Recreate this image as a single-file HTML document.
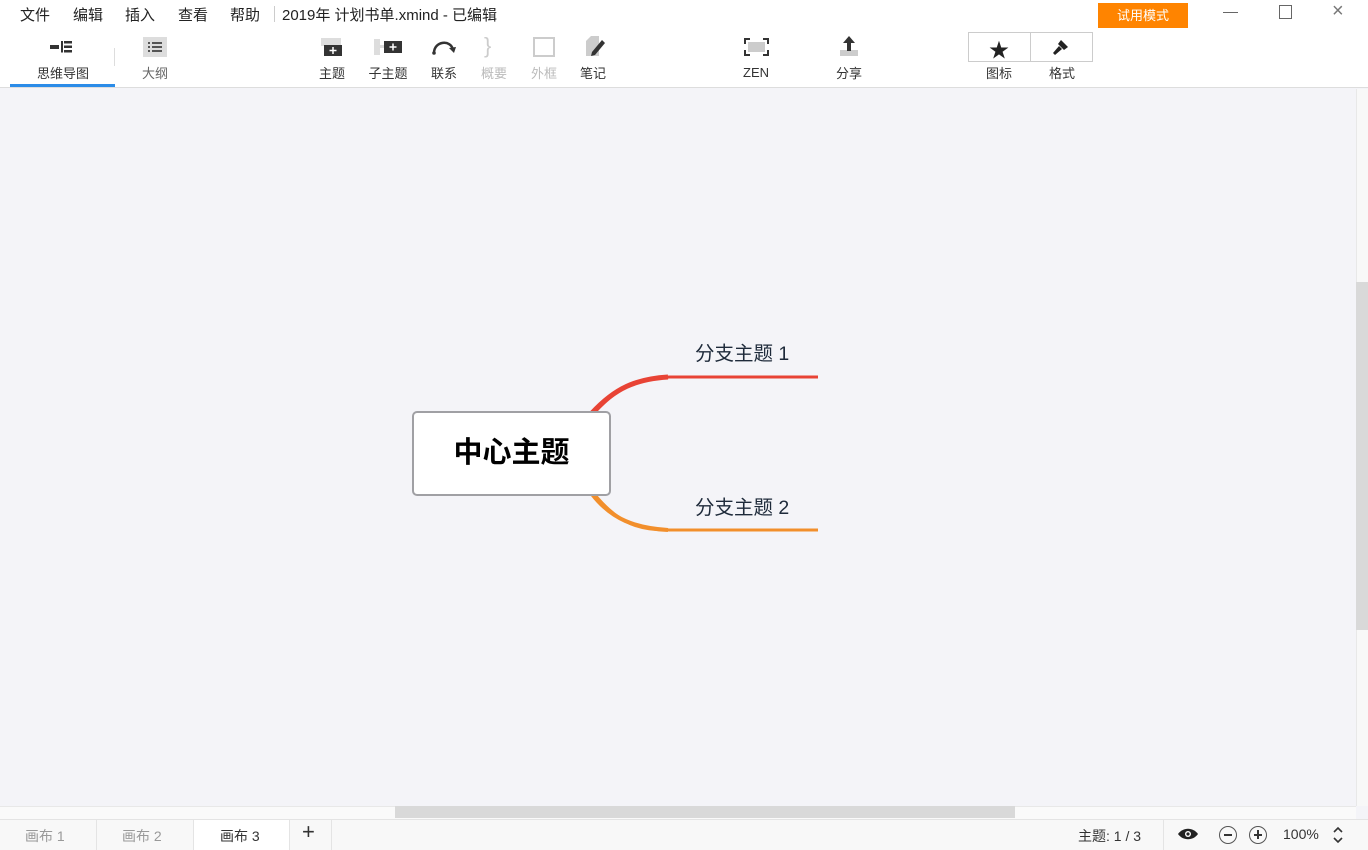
<!DOCTYPE html>
<html><head><meta charset="utf-8"><style>
*{margin:0;padding:0;box-sizing:border-box}
body{width:1368px;height:850px;overflow:hidden;background:#f4f4f8;font-family:"Liberation Sans","Noto Sans CJK SC",sans-serif;position:relative;color:#333}
.a{position:absolute}
.top{left:0;top:0;width:1368px;height:88px;background:#fff;border-bottom:1px solid #ddd}
.m{top:4px;font-size:15px;color:#222}
.tb{top:63px;font-size:13px;color:#333;text-align:center;width:60px}
.dis{color:#bbb}
</style></head><body>
<div class="a top"></div>
<div class="a m" style="left:20px">文件</div>
<div class="a m" style="left:73px">编辑</div>
<div class="a m" style="left:125px">插入</div>
<div class="a m" style="left:178px">查看</div>
<div class="a m" style="left:230px">帮助</div>
<div class="a" style="left:274px;top:6px;width:1px;height:16px;background:#ccc"></div>
<div class="a m" style="left:282px">2019年 计划书单.xmind - 已编辑</div>
<div class="a" style="left:1098px;top:3px;width:90px;height:25px;background:#ff8400;color:#fff;font-size:13px;text-align:center;line-height:25px">试用模式</div>
<div class="a" style="left:1223px;top:12px;width:15px;height:1px;background:#666"></div>
<div class="a" style="left:1279px;top:5px;width:13px;height:14px;border:1px solid #666"></div>
<div class="a" style="left:1332px;top:0px;font-size:20px;color:#777">×</div>
<svg class="a" style="left:50px;top:40px" width="26" height="14"><rect x="0" y="5" width="9" height="4" fill="#333"/><rect x="14" y="1" width="8" height="2.5" fill="#333"/><rect x="14" y="5.5" width="8" height="2.5" fill="#333"/><rect x="14" y="10" width="8" height="2.5" fill="#333"/><rect x="11" y="1" width="2" height="11.5" fill="#333"/></svg>
<div class="a tb" style="left:33px">思维导图</div>
<div class="a" style="left:10px;top:84px;width:105px;height:3px;background:#2b8ce8"></div>
<div class="a" style="left:114px;top:48px;width:1px;height:18px;background:#ddd"></div>
<svg class="a" style="left:143px;top:37px" width="24" height="20"><rect width="24" height="20" fill="#ddd"/><g fill="#555"><rect x="5" y="5" width="2" height="2"/><rect x="9" y="5" width="10" height="2"/><rect x="5" y="9" width="2" height="2"/><rect x="9" y="9" width="10" height="2"/><rect x="5" y="13" width="2" height="2"/><rect x="9" y="13" width="10" height="2"/></g></svg>
<div class="a tb dis" style="left:125px;color:#666">大纲</div>
<svg class="a" style="left:320px;top:36px" width="24" height="20"><rect x="1" y="2" width="20" height="8" fill="#ddd"/><rect x="4" y="9" width="18" height="11" fill="#333"/><path d="M13 11v7M9.5 14.5h7" stroke="#fff" stroke-width="1.5"/></svg>
<div class="a tb" style="left:302px">主题</div>
<svg class="a" style="left:374px;top:39px" width="28" height="16"><rect x="0" y="0" width="6" height="16" fill="#ddd"/><rect x="6" y="6" width="4" height="3" fill="#ddd"/><rect x="10" y="2" width="18" height="12" fill="#333"/><path d="M19 4.5v7M15.5 8h7" stroke="#fff" stroke-width="1.5"/></svg>
<div class="a tb" style="left:358px">子主题</div>
<svg class="a" style="left:431px;top:39px" width="26" height="16"><path d="M3 14C3 2 20 0 22 11" fill="none" stroke="#333" stroke-width="2.5"/><path d="M18 9l5 5 2-6z" fill="#333"/><circle cx="3" cy="14" r="1.8" fill="#333"/></svg>
<div class="a tb" style="left:414px">联系</div>
<div class="a" style="left:484px;top:33px;font-size:22px;color:#ccc">}</div>
<div class="a tb dis" style="left:464px">概要</div>
<div class="a" style="left:533px;top:37px;width:22px;height:20px;border:2px solid #ccc"></div>
<div class="a tb dis" style="left:514px">外框</div>
<svg class="a" style="left:584px;top:36px" width="22" height="22"><path d="M2 5l5-5h8v20H2z" fill="#ccc"/><path d="M8 16l10-12 3 3-10 12-4 1z" fill="#333"/></svg>
<div class="a tb" style="left:563px">笔记</div>
<svg class="a" style="left:744px;top:38px" width="25" height="18"><rect x="4" y="4" width="17" height="10" fill="#ccc"/><path d="M1 6V1h5M19 1h5v5M24 12v5h-5M6 17H1v-5" fill="none" stroke="#333" stroke-width="2"/></svg>
<div class="a tb" style="left:726px;top:65px">ZEN</div>
<svg class="a" style="left:839px;top:36px" width="20" height="22"><rect x="1" y="14" width="18" height="6" fill="#ccc"/><path d="M10 0l-6 7h4v8h4V7h4z" fill="#333"/></svg>
<div class="a tb" style="left:819px">分享</div>
<div class="a" style="left:968px;top:32px;width:125px;height:30px;border:1px solid #ccc;background:#fff"></div>
<div class="a" style="left:1030px;top:32px;width:1px;height:30px;background:#ccc"></div>
<div class="a" style="left:989px;top:34px;font-size:20px;color:#222">★</div>
<svg class="a" style="left:1052px;top:38px" width="18" height="18"><path d="M9 2l7 7-4 3-6-6z" fill="#222"/><path d="M7 8l3 3-7 6-2-2z" fill="#222"/></svg>
<div class="a tb" style="left:969px">图标</div>
<div class="a tb" style="left:1032px">格式</div>
<div class="a" style="left:1356px;top:89px;width:12px;height:717px;background:#f8f8f8;border-left:1px solid #e8e8e8"></div>
<div class="a" style="left:1356px;top:282px;width:12px;height:348px;background:#d9d9d9"></div>
<div class="a" style="left:0;top:806px;width:1356px;height:13px;background:#fafafa;border-top:1px solid #e8e8e8"></div>
<div class="a" style="left:395px;top:806px;width:620px;height:12px;background:#d9d9d9"></div>
<div class="a" style="left:0;top:819px;width:1368px;height:31px;background:#f8f8f8;border-top:1px solid #e4e4e4"></div>
<div class="a" style="left:193px;top:820px;width:97px;height:30px;background:#fff;border-left:1px solid #e4e4e4;border-right:1px solid #e4e4e4"></div>
<div class="a" style="left:96px;top:820px;width:1px;height:30px;background:#e4e4e4"></div>
<div class="a" style="left:331px;top:820px;width:1px;height:30px;background:#e4e4e4"></div>
<div class="a" style="left:25px;top:826px;font-size:14px;color:#999">画布 1</div>
<div class="a" style="left:122px;top:826px;font-size:14px;color:#999">画布 2</div>
<div class="a" style="left:220px;top:826px;font-size:14px;color:#333">画布 3</div>
<div class="a" style="left:302px;top:819px;font-size:22px;color:#333">+</div>
<div class="a" style="left:1078px;top:826px;font-size:14px;color:#333">主题: 1 / 3</div>
<div class="a" style="left:1163px;top:820px;width:1px;height:30px;background:#e4e4e4"></div>
<svg class="a" style="left:1177px;top:827px" width="22" height="14"><path d="M1 7C6 0 16 0 21 7 16 14 6 14 1 7z" fill="#222"/><circle cx="11" cy="7" r="3" fill="#fff"/><circle cx="11" cy="7" r="1.6" fill="#222"/></svg>
<div class="a" style="left:1219px;top:826px;width:18px;height:18px;border:1px solid #555;border-radius:50%"></div>
<div class="a" style="left:1224px;top:834px;width:8px;height:1.5px;background:#333"></div>
<div class="a" style="left:1249px;top:826px;width:18px;height:18px;border:1px solid #555;border-radius:50%"></div>
<div class="a" style="left:1254px;top:834px;width:8px;height:1.5px;background:#333"></div>
<div class="a" style="left:1257.3px;top:830px;width:1.5px;height:9px;background:#333"></div>
<div class="a" style="left:1283px;top:826px;font-size:14px;color:#333">100%</div>
<svg class="a" style="left:1332px;top:825px" width="12" height="20"><path d="M2 7l4-4 4 4M2 13l4 4 4-4" fill="none" stroke="#333" stroke-width="1.6"/></svg>
<svg class="a" style="left:0;top:0" width="1368" height="850">
<path d="M595 412C620 385 640 377 670 377H818" fill="none" stroke="#e84335" stroke-width="3"/>
<path d="M592 413C615 388 636 379 668 377" fill="none" stroke="#e84335" stroke-width="5"/>
<path d="M595 495C620 525 640 530 670 530H818" fill="none" stroke="#f28f2c" stroke-width="3"/>
<path d="M592 494C612 520 636 528 668 530" fill="none" stroke="#f28f2c" stroke-width="4"/>
</svg>
<div class="a" style="left:412px;top:411px;width:199px;height:85px;background:#fff;border:2px solid #a0a0a4;border-radius:5px;font-size:29px;font-weight:bold;color:#000;text-align:center;line-height:81px">中心主题</div>
<div class="a" style="left:695px;top:337px;font-size:19.5px;color:#1e2a3a">分支主题 1</div>
<div class="a" style="left:695px;top:491px;font-size:19.5px;color:#1e2a3a">分支主题 2</div>
</body></html>
